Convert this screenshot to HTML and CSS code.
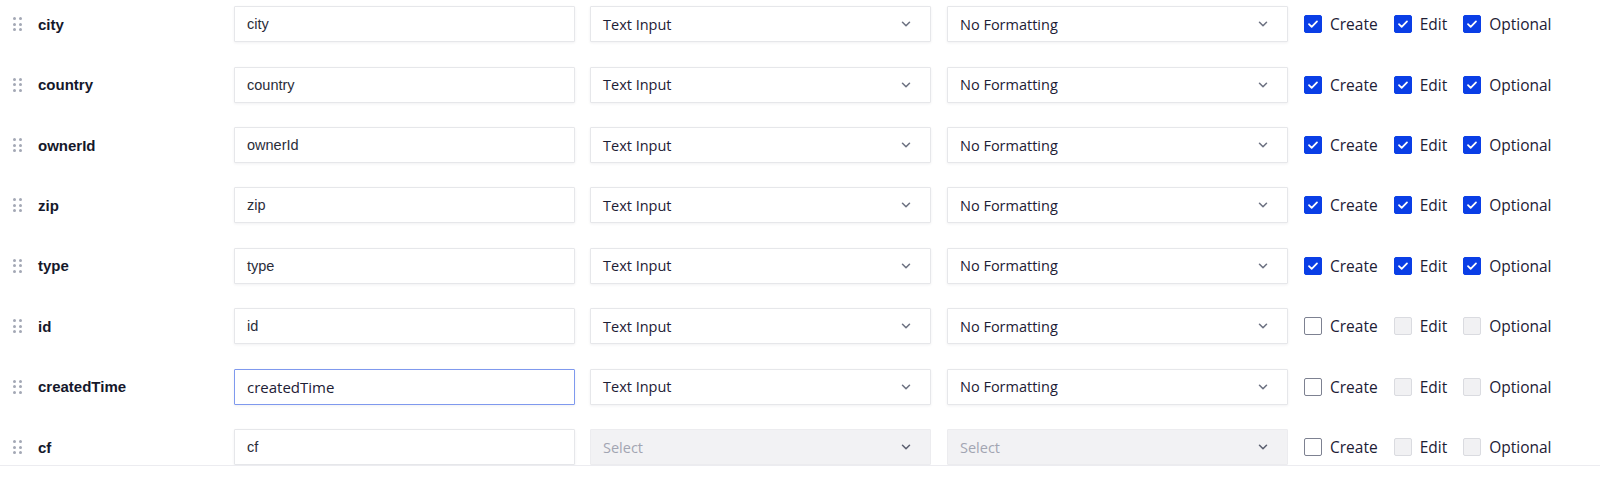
FILE: index.html
```html
<!DOCTYPE html>
<html>
<head>
<meta charset="utf-8">
<link rel="stylesheet" href="styles.css">
</head>
<body>
<div class="list">
  <div class="row">
    <div class="name"><span class="handle"><i></i><i></i><i></i><i></i><i></i><i></i></span><span class="label">city</span></div>
    <div class="input">city</div>
    <div class="select"><span>Text Input</span><svg viewBox="0 0 12 12"><path d="M3 4.5l3 3 3-3"/></svg></div>
    <div class="select"><span>No Formatting</span><svg viewBox="0 0 12 12"><path d="M3 4.5l3 3 3-3"/></svg></div>
    <div class="checks">
      <label class="cb"><span class="box on"><svg viewBox="0 0 18 18"><path d="M4.5 9.2l3 3 6-6.2"/></svg></span>Create</label>
      <label class="cb"><span class="box on"><svg viewBox="0 0 18 18"><path d="M4.5 9.2l3 3 6-6.2"/></svg></span>Edit</label>
      <label class="cb"><span class="box on"><svg viewBox="0 0 18 18"><path d="M4.5 9.2l3 3 6-6.2"/></svg></span>Optional</label>
    </div>
  </div>
  <div class="row">
    <div class="name"><span class="handle"><i></i><i></i><i></i><i></i><i></i><i></i></span><span class="label">country</span></div>
    <div class="input">country</div>
    <div class="select"><span>Text Input</span><svg viewBox="0 0 12 12"><path d="M3 4.5l3 3 3-3"/></svg></div>
    <div class="select"><span>No Formatting</span><svg viewBox="0 0 12 12"><path d="M3 4.5l3 3 3-3"/></svg></div>
    <div class="checks">
      <label class="cb"><span class="box on"><svg viewBox="0 0 18 18"><path d="M4.5 9.2l3 3 6-6.2"/></svg></span>Create</label>
      <label class="cb"><span class="box on"><svg viewBox="0 0 18 18"><path d="M4.5 9.2l3 3 6-6.2"/></svg></span>Edit</label>
      <label class="cb"><span class="box on"><svg viewBox="0 0 18 18"><path d="M4.5 9.2l3 3 6-6.2"/></svg></span>Optional</label>
    </div>
  </div>
  <div class="row">
    <div class="name"><span class="handle"><i></i><i></i><i></i><i></i><i></i><i></i></span><span class="label">ownerId</span></div>
    <div class="input">ownerId</div>
    <div class="select"><span>Text Input</span><svg viewBox="0 0 12 12"><path d="M3 4.5l3 3 3-3"/></svg></div>
    <div class="select"><span>No Formatting</span><svg viewBox="0 0 12 12"><path d="M3 4.5l3 3 3-3"/></svg></div>
    <div class="checks">
      <label class="cb"><span class="box on"><svg viewBox="0 0 18 18"><path d="M4.5 9.2l3 3 6-6.2"/></svg></span>Create</label>
      <label class="cb"><span class="box on"><svg viewBox="0 0 18 18"><path d="M4.5 9.2l3 3 6-6.2"/></svg></span>Edit</label>
      <label class="cb"><span class="box on"><svg viewBox="0 0 18 18"><path d="M4.5 9.2l3 3 6-6.2"/></svg></span>Optional</label>
    </div>
  </div>
  <div class="row">
    <div class="name"><span class="handle"><i></i><i></i><i></i><i></i><i></i><i></i></span><span class="label">zip</span></div>
    <div class="input">zip</div>
    <div class="select"><span>Text Input</span><svg viewBox="0 0 12 12"><path d="M3 4.5l3 3 3-3"/></svg></div>
    <div class="select"><span>No Formatting</span><svg viewBox="0 0 12 12"><path d="M3 4.5l3 3 3-3"/></svg></div>
    <div class="checks">
      <label class="cb"><span class="box on"><svg viewBox="0 0 18 18"><path d="M4.5 9.2l3 3 6-6.2"/></svg></span>Create</label>
      <label class="cb"><span class="box on"><svg viewBox="0 0 18 18"><path d="M4.5 9.2l3 3 6-6.2"/></svg></span>Edit</label>
      <label class="cb"><span class="box on"><svg viewBox="0 0 18 18"><path d="M4.5 9.2l3 3 6-6.2"/></svg></span>Optional</label>
    </div>
  </div>
  <div class="row">
    <div class="name"><span class="handle"><i></i><i></i><i></i><i></i><i></i><i></i></span><span class="label">type</span></div>
    <div class="input">type</div>
    <div class="select"><span>Text Input</span><svg viewBox="0 0 12 12"><path d="M3 4.5l3 3 3-3"/></svg></div>
    <div class="select"><span>No Formatting</span><svg viewBox="0 0 12 12"><path d="M3 4.5l3 3 3-3"/></svg></div>
    <div class="checks">
      <label class="cb"><span class="box on"><svg viewBox="0 0 18 18"><path d="M4.5 9.2l3 3 6-6.2"/></svg></span>Create</label>
      <label class="cb"><span class="box on"><svg viewBox="0 0 18 18"><path d="M4.5 9.2l3 3 6-6.2"/></svg></span>Edit</label>
      <label class="cb"><span class="box on"><svg viewBox="0 0 18 18"><path d="M4.5 9.2l3 3 6-6.2"/></svg></span>Optional</label>
    </div>
  </div>
  <div class="row">
    <div class="name"><span class="handle"><i></i><i></i><i></i><i></i><i></i><i></i></span><span class="label">id</span></div>
    <div class="input">id</div>
    <div class="select"><span>Text Input</span><svg viewBox="0 0 12 12"><path d="M3 4.5l3 3 3-3"/></svg></div>
    <div class="select"><span>No Formatting</span><svg viewBox="0 0 12 12"><path d="M3 4.5l3 3 3-3"/></svg></div>
    <div class="checks">
      <label class="cb"><span class="box"></span>Create</label>
      <label class="cb"><span class="box dis"></span>Edit</label>
      <label class="cb"><span class="box dis"></span>Optional</label>
    </div>
  </div>
  <div class="row">
    <div class="name"><span class="handle"><i></i><i></i><i></i><i></i><i></i><i></i></span><span class="label">createdTime</span></div>
    <div class="input focus">createdTime</div>
    <div class="select"><span>Text Input</span><svg viewBox="0 0 12 12"><path d="M3 4.5l3 3 3-3"/></svg></div>
    <div class="select"><span>No Formatting</span><svg viewBox="0 0 12 12"><path d="M3 4.5l3 3 3-3"/></svg></div>
    <div class="checks">
      <label class="cb"><span class="box"></span>Create</label>
      <label class="cb"><span class="box dis"></span>Edit</label>
      <label class="cb"><span class="box dis"></span>Optional</label>
    </div>
  </div>
  <div class="row">
    <div class="name"><span class="handle"><i></i><i></i><i></i><i></i><i></i><i></i></span><span class="label">cf</span></div>
    <div class="input">cf</div>
    <div class="select disabled"><span>Select</span><svg viewBox="0 0 12 12"><path d="M3 4.5l3 3 3-3"/></svg></div>
    <div class="select disabled"><span>Select</span><svg viewBox="0 0 12 12"><path d="M3 4.5l3 3 3-3"/></svg></div>
    <div class="checks">
      <label class="cb"><span class="box"></span>Create</label>
      <label class="cb"><span class="box dis"></span>Edit</label>
      <label class="cb"><span class="box dis"></span>Optional</label>
    </div>
  </div>
</div>
</body>
</html>
```

FILE: styles.css
```css
* { box-sizing: border-box; }
html, body { margin: 0; padding: 0; background: #fff; }
body { width: 1600px; height: 477px; overflow: hidden; color: #1b1e33; }

.list {
  display: flex;
  flex-direction: column;
  padding-top: 6px;
  border-bottom: 1px solid #ececf0;
  height: 466px;
  overflow: hidden;
}

.row {
  display: flex;
  align-items: center;
  height: 60.43px;
  flex: 0 0 60.43px;
  padding: 0 0 24px 12px;
}

.name {
  width: 222px;
  display: flex;
  align-items: center;
  gap: 16px;
}
.handle {
  display: grid;
  grid-template-columns: 3px 3px;
  grid-auto-rows: 3px;
  gap: 2.5px 3px;
  padding-left: 1px;
}
.handle i { display: block; width: 3px; height: 3px; border-radius: 50%; background: #a3a8b5; }
.label {
  font-family: "Liberation Sans", Arial, sans-serif;
  font-weight: 700;
  font-size: 15px;
  color: #15182b;
}

.input, .select {
  height: 36px;
  border: 1px solid #e6e7ea;
  box-shadow: 0 1px 3px rgba(20, 25, 50, 0.06);
  background: #fff;
  display: flex;
  align-items: center;
  padding: 0 12px;
  border-radius: 1px;
}
.input {
  width: 341px;
  font-family: "Liberation Sans", Arial, sans-serif;
  font-size: 14.5px;
  color: #2a2d3a;
}
.input.focus {
  border-color: #7f99ee;
  font-family: "Open Sans", sans-serif;
  font-size: 15px;
  color: #1d2035;
}
.select {
  width: 341px;
  margin-left: 15px;
  justify-content: space-between;
  font-family: "Open Sans", sans-serif;
  font-size: 14.5px;
  color: #1d2035;
}
.select + .select { margin-left: 16px; }
.select svg { width: 14px; height: 14px; margin-right: 5px; }
.select svg path { fill: none; stroke: #6d7282; stroke-width: 1.3; stroke-linecap: round; stroke-linejoin: round; }
.select.disabled { background: #f2f2f4; color: #a2a5b2; box-shadow: none; border-color: #ececef; }
.select.disabled svg path { stroke: #5c6070; }

.checks {
  display: flex;
  align-items: center;
  margin-left: 16px;
  gap: 16px;
  font-family: "Open Sans", sans-serif;
  font-size: 15.5px;
  color: #1d2035;
}
.cb { display: flex; align-items: center; gap: 8px; }
.box {
  width: 18px; height: 18px;
  border: 1.5px solid #7d8191;
  border-radius: 2px;
  background: #fff;
  display: flex; align-items: center; justify-content: center;
}
.box.on { background: #0a3ee6; border-color: #0a3ee6; }
.box.on svg { width: 18px; height: 18px; }
.box.on svg path { fill: none; stroke: #fff; stroke-width: 2; stroke-linecap: round; stroke-linejoin: round; }
.box.dis { background: #f1f1f3; border-color: #dadbe0; border-width: 1px; }
```
